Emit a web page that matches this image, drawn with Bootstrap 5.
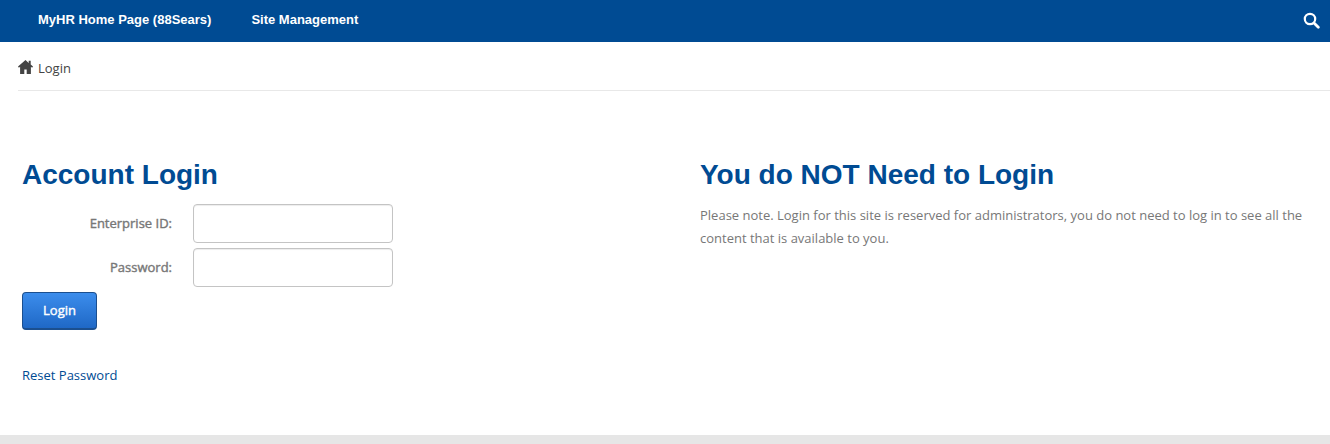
<!DOCTYPE html>
<html lang="en">
<head>
<meta charset="utf-8">
<title>Login</title>
<link href="https://cdn.jsdelivr.net/npm/bootstrap@5.3.0/dist/css/bootstrap.min.css" rel="stylesheet">
<style>
html, body { height: 444px; overflow: hidden; }
body { font-family: "Open Sans", sans-serif; font-size: 13px; background: #fff; color: #777; display: flex; flex-direction: column; }
.hr-topbar { height: 42px; background: #004b93; padding: 0 10px 2px 38px; flex: none; }
.hr-toplink { font-family: "Liberation Sans", sans-serif; font-weight: 700; font-size: 13px; color: #fff; text-decoration: none; margin-right: 40px; }
.hr-toplink:hover { color: #fff; }
.hr-crumbs { margin: 0 0 0 18px; height: 49px; border-bottom: 1px solid #e8e8e8; flex: none; color: #444; font-size: 13px; gap: 5px; padding-top: 6px; }
.hr-homeicon { margin-top: -4px; }
.hr-main { flex: 1 1 auto; padding: 68px 22px 0; display: grid; grid-template-columns: 678px 1fr; }
.hr-heading { font-family: "Liberation Sans", sans-serif; font-weight: 700; font-size: 28px; line-height: 32px; color: #004b93; margin: 0; }
.hr-account { margin-bottom: 13px; }
.hr-formrow { display: flex; align-items: center; height: 39px; margin-bottom: 5px; }
.hr-formrow label { width: 150px; text-align: right; font-weight: 400; -webkit-text-stroke: .4px #777; font-size: 13px; color: #777; margin: 0; }
.hr-input { width: 200px; height: 39px; margin-left: 21px; border: 1px solid #c4c4c4; border-radius: 4px; box-shadow: inset 0 1px 1px rgba(0,0,0,.075); padding: 4px 8px; }
.hr-btn { display: block; width: 75px; height: 38px; padding: 0; background: linear-gradient(#3c8dec, #1f68c6); border: 1px solid #1b4f8f; border-bottom-width: 2px; border-radius: 4px; color: #fff; font-size: 13px; font-weight: 400; -webkit-text-stroke: .4px #fff; }
.hr-btn:hover { color: #fff; background: linear-gradient(#3c8dec, #1f68c6); border-color: #1b4f8f; }
.hr-reset { display: inline-block; color: #004b93; text-decoration: none; font-size: 13px; margin-top: 35px; line-height: 20px; }
.hr-note { font-size: 13px; line-height: 23px; margin: 13px 0 0; color: #777; width: 610px; }
.hr-foot { height: 9px; background: #e6e6e6; flex: none; }
</style>
</head>
<body>
<nav class="hr-topbar d-flex align-items-center">
  <a class="hr-toplink" href="#">MyHR Home Page (88Sears)</a>
  <a class="hr-toplink" href="#">Site Management</a>
  <svg class="ms-auto" width="17" height="17" viewBox="0 0 17 17" aria-label="Search" role="img"><circle cx="7" cy="7" r="5.2" fill="none" stroke="#fff" stroke-width="2.2"/><path d="M11 11l4.3 4.3" stroke="#fff" stroke-width="2.8" stroke-linecap="round"/></svg>
</nav>
<div class="hr-crumbs d-flex align-items-center">
  <svg class="hr-homeicon" width="15" height="14" viewBox="0 0 15 14" aria-hidden="true"><path fill="#444" d="M7.5 0 0 6.6l.9 1.1 1.2-1V14h4.2V9.4h2.4V14h4.2V6.7l1.2 1 .9-1.1-2.3-2V.8h-2v2.1L7.5 0z"/></svg>
  <span>Login</span>
</div>
<main class="hr-main">
  <section>
    <h1 class="hr-heading hr-account">Account Login</h1>
    <form>
      <div class="hr-formrow"><label for="eid">Enterprise ID:</label><input id="eid" class="form-control hr-input" type="text"></div>
      <div class="hr-formrow"><label for="pw">Password:</label><input id="pw" class="form-control hr-input" type="password"></div>
      <button type="button" class="btn hr-btn">Login</button>
    </form>
    <a class="hr-reset" href="#">Reset Password</a>
  </section>
  <section>
    <h1 class="hr-heading">You do NOT Need to Login</h1>
    <p class="hr-note">Please note. Login for this site is reserved for administrators, you do not need to log in to see all the content that is available to you.</p>
  </section>
</main>
<div class="hr-foot"></div>
<script src="https://cdn.jsdelivr.net/npm/bootstrap@5.3.0/dist/js/bootstrap.bundle.min.js"></script>
</body>
</html>
